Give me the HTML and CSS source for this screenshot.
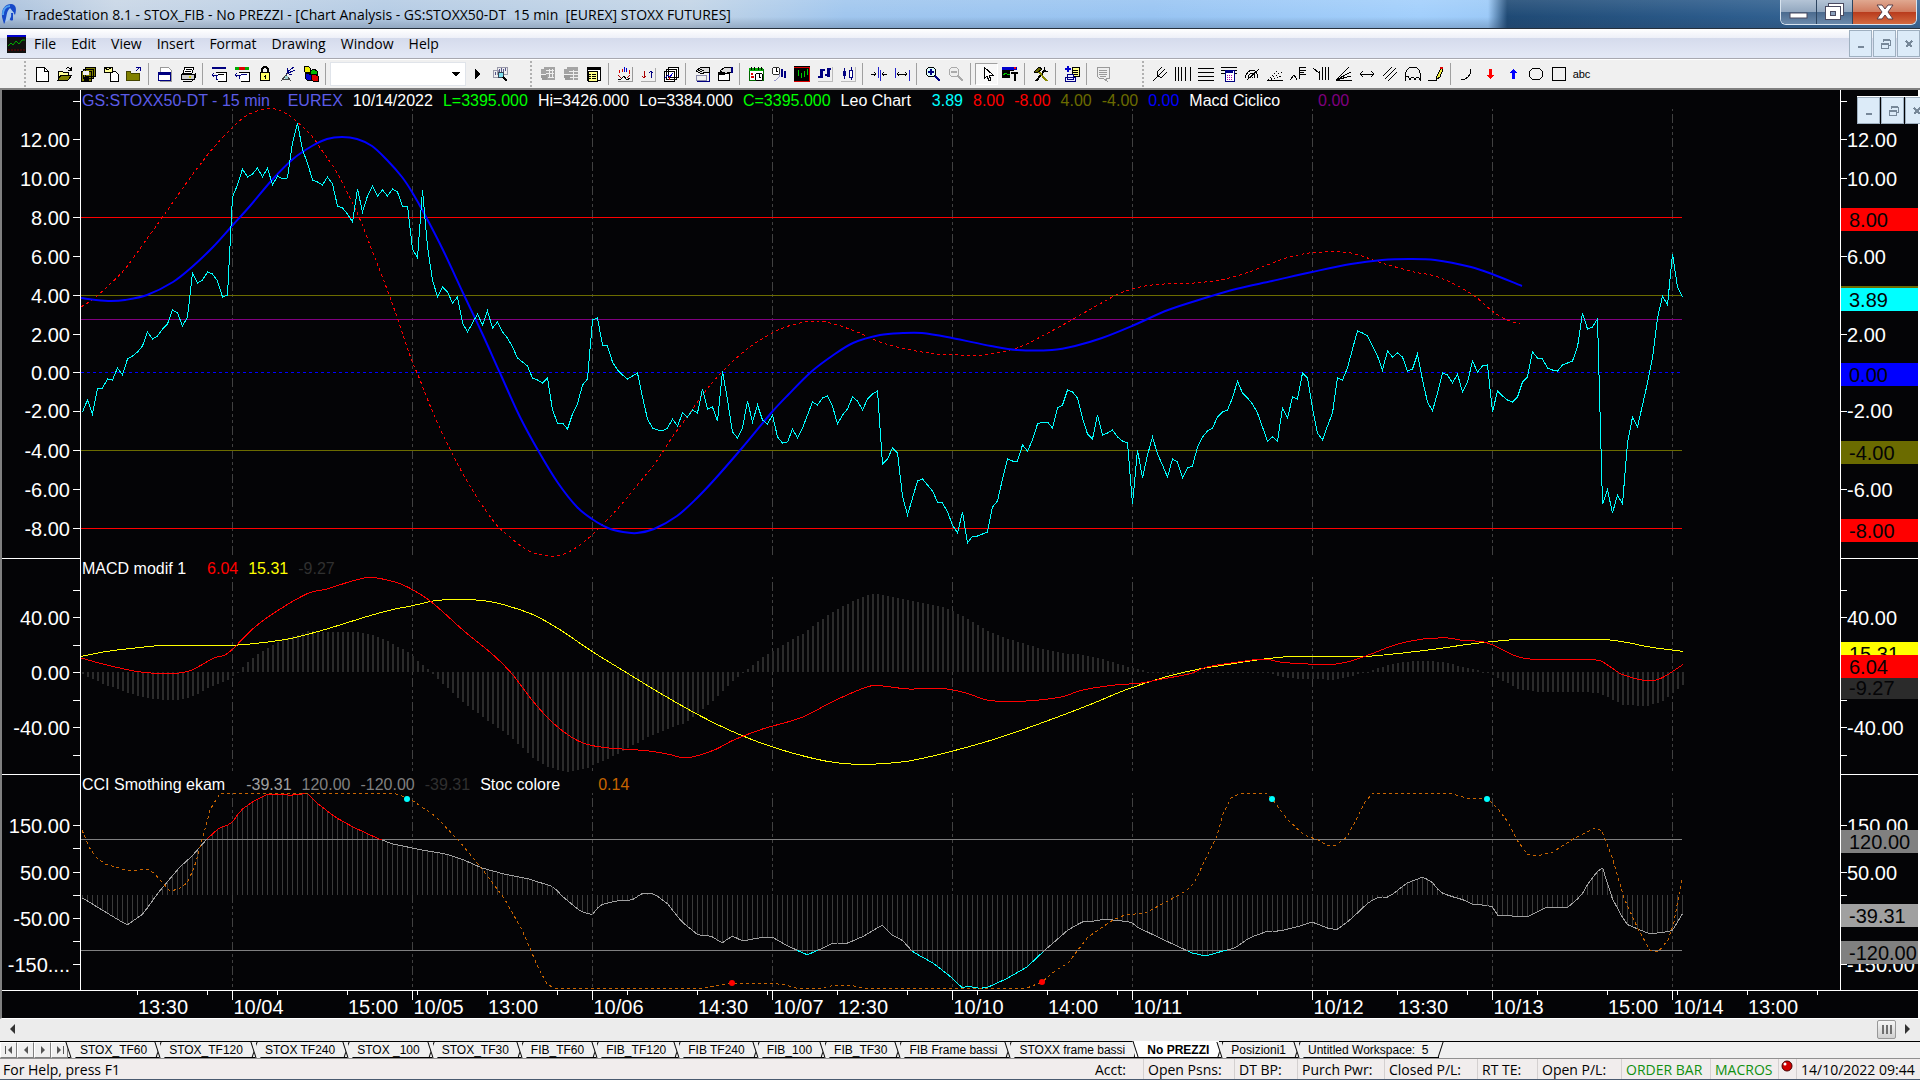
FILE: index.html
```html
<!DOCTYPE html>
<html lang="en">
<head>
  <meta charset="UTF-8">
  <title>TradeStation 8.1 - STOX_FIB</title>
  <link rel="stylesheet" href="styles.css">
</head>
<body>
  <header class="titlebar">
    <svg class="logo" viewBox="0 0 16 22">
      <path d="M1 14 C0 5 5 1 10 1 C15 1 16 6 14 12 L12 9 L12 17 C9 19 8 15 8 12 L3 21 Z" fill="#1648c8"/>
      <path d="M4 19 C6 13 5 9 9 5 L13 10 L10 10 C11 15 8 18 4 19 Z" fill="#a9c9ee"/>
      <path d="M2 12 C2 6 5 3 9 3" stroke="#4fa0f0" stroke-width="2" fill="none"/>
    </svg>
    <h1>TradeStation 8.1 - STOX_FIB - No PREZZI - [Chart Analysis - GS:STOXX50-DT&nbsp; 15 min&nbsp; [EUREX] STOXX FUTURES]</h1>
    <div class="win-buttons">
      <button class="win-min" aria-label="Minimize"><svg width="20" height="8"><rect x="1" y="1" width="17" height="5" fill="#fff" stroke="#4a4a60"/></svg></button>
      <button class="win-max" aria-label="Restore"><svg width="22" height="18"><rect x="4.500" y="0.500" width="15" height="12" fill="#fff" stroke="#4a4a60"/><rect x="1.500" y="3.500" width="15" height="13" fill="#fff" stroke="#4a4a60"/><rect x="6.500" y="8.500" width="5" height="4" fill="#8aa0bc" stroke="#4a4a60"/></svg></button>
      <button class="win-close" aria-label="Close"><svg width="20" height="18"><path d="M2 2 H7 L10 6 L13 2 H18 L13 9 L18 16 H13 L10 12 L7 16 H2 L7 9 Z" fill="#fff" stroke="#5a4048"/></svg></button>
    </div>
  </header>

  <nav class="menubar">
    <svg class="doc-icon" viewBox="0 0 19 18"><rect width="19" height="18" fill="#101010"/><rect width="19" height="2" fill="#00c"/><path d="M1 11 L4 8 L6 10 L9 6 L12 9 L15 5 L18 5" stroke="#0a0" fill="none"/><path d="M1 15 H18" stroke="#700" stroke-dasharray="2 1"/></svg>
    <button>File</button>
    <button>Edit</button>
    <button>View</button>
    <button>Insert</button>
    <button>Format</button>
    <button>Drawing</button>
    <button>Window</button>
    <button>Help</button>
    <div class="mdi-buttons">
      <button aria-label="Minimize chart"><svg width="12" height="12"><path d="M3 9 H9" stroke="#778899" stroke-width="2"/></svg></button>
      <button aria-label="Restore chart"><svg width="12" height="12"><path d="M4 4 V2 H11 V7 H9 M4 1.500 H11 M2 5 H9 V10 H2 Z M2 6 H9" stroke="#778899" fill="none"/></svg></button>
      <button aria-label="Close chart"><svg width="12" height="12"><path d="M3 3 L9 9 M9 3 L3 9" stroke="#778899" stroke-width="2"/></svg></button>
    </div>
  </nav>

  <div class="toolbar">
    <div class="tools">
      <button aria-label="New"><svg viewBox="0 0 16 16"><path d="M2 1 H10 L14 5 V15 H2 Z" fill="#fff" stroke="#000"/><path d="M10 1 V5 H14" fill="none" stroke="#000"/></svg></button>
      <button aria-label="Open"><svg viewBox="0 0 16 16"><path d="M1 14 V5 H5 L6 6 H11 V9" fill="#ff9" stroke="#000"/><path d="M1 14 L4 9 H15 L11 14 Z" fill="#808000" stroke="#000"/><path d="M9 3 Q12 0 14 4 M14 1 V4 H11" fill="none" stroke="#000"/></svg></button>
      <button aria-label="Save all"><svg viewBox="0 0 16 16"><path d="M5 1 H15 V10 H5 Z M3 3 H13 V12 H3 Z M1 5 H11 V15 H1 Z" fill="#808000" stroke="#000"/><rect x="3" y="5" width="6" height="4" fill="#eee"/><rect x="4" y="11" width="5" height="4" fill="#000"/></svg></button>
      <button aria-label="Send"><svg viewBox="0 0 16 16"><path d="M7 5 H12 L15 8 V15 H7 Z" fill="#fff" stroke="#000"/><path d="M1 1 H9 V6 H1 Z" fill="#ff9" stroke="#000"/><path d="M1 1 L5 4 L9 1" stroke="#000" fill="none"/></svg></button>
      <button aria-label="Close workspace"><svg viewBox="0 0 16 16"><path d="M0.500 14.500 V5.500 H4 L5 7 H13.500 V14.500 Z" fill="#808000" stroke="#440"/><path d="M10 5 L14 1 M10 1 H14 V5" stroke="#00008b" fill="none"/></svg></button>
      <span class="sep"></span>
      <button aria-label="Window"><svg viewBox="0 0 16 16"><path d="M3 1 H11 L14 4 V15 H3 Z" fill="#fff" stroke="#999"/><rect x="1.500" y="6.500" width="12" height="8" fill="#fff" stroke="#000080"/><rect x="1" y="6" width="13" height="3" fill="#000080"/></svg></button>
      <button aria-label="Print"><svg viewBox="0 0 16 16"><path d="M5 1 H14 L12 7 H3 Z" fill="#fff" stroke="#000"/><path d="M6 3 H12 M5 5 H11" stroke="#000"/><path d="M1 8 H14 V13 H1 Z" fill="#ccc" stroke="#000"/><path d="M3 15 H12 L15 12 V7" fill="none" stroke="#000"/><path d="M9 11 H11" stroke="#cc0" stroke-width="2"/></svg></button>
      <span class="sep"></span>
      <button aria-label="Format window"><svg viewBox="0 0 16 16"><path d="M1 1 H15 V3 H1 Z" fill="#000080"/><path d="M5 6 H15 V15 H7" fill="#fff" stroke="#000"/><path d="M7 8 H13" stroke="#000"/><path d="M5 9 V13 H7 M1 9 H7 M3 7 L1 9 L3 11" stroke="#000080" fill="none"/></svg></button>
      <button aria-label="Format symbols"><svg viewBox="0 0 16 16"><path d="M1 1 H5 V4 H1 Z M11 1 H15 V4 H11 Z" fill="#0a0"/><path d="M5 1 H11 V4 H5 Z" fill="#d00"/><path d="M5 6 H15 V15 H7" fill="#fff" stroke="#000"/><path d="M7 8 H13 M1 9 H7 M3 7 L1 9 L3 11 M5 9 V13" stroke="#000080" fill="none"/></svg></button>
      <button aria-label="Lock"><svg viewBox="0 0 16 16"><path d="M5 7 V3 Q8 -1 11 3 V7" fill="none" stroke="#000" stroke-width="2"/><rect x="3.500" y="6.500" width="9" height="8" fill="#ff6" stroke="#000"/><path d="M8 9 V13 M7 10 H9" stroke="#000"/></svg></button>
      <button aria-label="Data feed"><svg viewBox="0 0 16 16"><path d="M7 6 L14 1 M6 8 L15 4 M8 2 Q6 8 12 9" stroke="#000080" fill="none"/><path d="M1 15 L6 9 L11 15 M3 13 H10 M6 9 L8 7" stroke="#444" fill="none"/><path d="M5 10 H8 V13 H5 Z" fill="#9cc"/></svg></button>
      <button aria-label="Cubes"><svg viewBox="0 0 16 16"><path d="M1 1 L5 0 L7 2 V6 L3 7 L1 5 Z" fill="#ee0" stroke="#000"/><path d="M7 5 L11 3 L14 5 V9 L10 10 L7 8 Z" fill="#0b0" stroke="#000"/><path d="M2 8 L5 7 L8 9 V14 L4 14 L2 12 Z" fill="#00c" stroke="#000"/><path d="M8 9 L12 8 L15 10 V15 L10 15 L8 13 Z" fill="#d00" stroke="#000"/></svg></button>
      <span class="sep"></span>
      <select class="symbol" aria-label="Symbol"><option></option></select>
      <button class="go" aria-label="Go"><svg viewBox="0 0 16 16"><path d="M6 3 L11 8 L6 13 Z" fill="#000"/></svg></button>
      <button aria-label="Find symbol"><svg viewBox="0 0 16 16"><path d="M5 1 H15 V8 H5 Z M1 4 H6 V11 H1 Z" fill="#eee" stroke="#99a"/><path d="M7 3 V6 M9 2 V6 M11 3 V6 M13 2 V5 M3 6 V9" stroke="#558"/><circle cx="9" cy="9" r="3" fill="#7fe0f0" stroke="#345"/><path d="M11 11 L15 15" stroke="#000" stroke-width="2"/></svg></button>
    </div>
    <div class="tools">
      <button aria-label="Quote data" disabled><svg viewBox="0 0 16 16"><path d="M4 1 H15 V14 H6 V8 H1 V3 H4 Z" fill="#a4a4a4"/><path d="M6 4 H14 M6 7 H14 M9 3 V12 M12 3 V12 M8 11 H14" stroke="#eee"/><path d="M1 9 H7 V14 H2 Z" fill="#999"/></svg></button>
      <button aria-label="Table" disabled><svg viewBox="0 0 16 16"><path d="M4 1 H15 V14 H6 V8 H1 V3 H4 Z" fill="#a4a4a4"/><path d="M6 5 H15 M6 8 H15 M6 11 H15 M10 4 V14" stroke="#eee"/><path d="M1 9 H7 V14 H2 Z" fill="#999"/></svg></button>
      <button aria-label="Data window"><svg viewBox="0 0 16 16"><rect x="1.500" y="1.500" width="13" height="13" fill="#fff" stroke="#000"/><rect x="1" y="1" width="14" height="3"/><rect x="2" y="5" width="9" height="10" fill="#ff8" stroke="#000"/><path d="M3 8 H5 M6 8 H10 M3 10 H5 M6 10 H10 M3 12 H5 M6 12 H10" stroke="#000"/></svg></button>
      <span class="sep"></span>
      <button aria-label="Indicators"><svg viewBox="0 0 16 16"><path d="M15 1 V15 H1" stroke="#999" fill="none"/><path d="M1 13 L4 13 L7 10 L10 14 L13 12" stroke="#000" fill="none"/><path d="M2 4 V7 M5 3 V6 M12 4 V8" stroke="#d00"/><path d="M7 1 V6 M9 2 V6" stroke="#00c"/><path d="M1 9 L4 12 M13 9 L10 12" stroke="#a00"/></svg></button>
      <button aria-label="Strategies"><svg viewBox="0 0 16 16"><path d="M15 2 V15 H1" stroke="#aaa" fill="none"/><path d="M4 5 V12 M2 10 L4 12 L6 10" stroke="#a00" fill="none"/><path d="M11 5 V12 M9 7 L11 5 L13 7" stroke="#000080" fill="none"/></svg></button>
      <button aria-label="Studies"><svg viewBox="0 0 16 16"><path d="M5 1 H15 V11 H5 Z M3 3 H13 V13 H3 Z M1 5 H11 V15 H1 Z" fill="#fff" stroke="#000"/><path d="M2 12 L5 9 L7 11 L10 7" stroke="#00c" fill="none"/><path d="M6 11 V14" stroke="#c00"/></svg></button>
      <span class="sep"></span>
      <button aria-label="Format analysis"><svg viewBox="0 0 16 16"><path d="M2 5 L7 1 H15 V6 H11 L8 8 Z" fill="#ddd" stroke="#000"/><path d="M4 5 L8 3 M6 6 L10 4" stroke="#000"/><rect x="2" y="9" width="10" height="5" fill="#eee" stroke="#88a"/><path d="M15 7 V15 H3" stroke="#000080" fill="none"/></svg></button>
      <button aria-label="Format strategies"><svg viewBox="0 0 16 16"><path d="M3 5 L8 1 H15 V6 H12 L9 8 Z" fill="#ddd" stroke="#000"/><path d="M15 1 V7" stroke="#000080" stroke-width="2"/><rect x="1.500" y="7.500" width="11" height="7" fill="#fff" stroke="#000"/><rect x="1" y="6" width="7" height="3"/></svg></button>
      <span class="sep"></span>
      <button aria-label="Data range"><svg viewBox="0 0 16 16"><rect x="1" y="3" width="14" height="11" fill="#fff" stroke="#060"/><rect x="1" y="2" width="14" height="3" fill="#0a0"/><path d="M3 1 V4 M6 1 V4 M10 1 V4 M13 1 V4" stroke="#000"/><path d="M3 8 H5 M3 11 H6" stroke="#d00" stroke-width="2"/><circle cx="11" cy="11" r="4" fill="#fff" stroke="#000"/><path d="M11 8 V11 H13" stroke="#000" fill="none"/></svg></button>
      <button aria-label="Interval"><svg viewBox="0 0 16 16"><circle cx="5" cy="5" r="4" fill="#fff" stroke="#333"/><path d="M5 2 V5 H7" stroke="#000" fill="none"/><path d="M3 15 Q8 13 9 8" stroke="#99c" fill="none"/><path d="M11 3 V11 M14 5 V12" stroke="#000080" stroke-width="2"/></svg></button>
      <button aria-label="Bar chart"><svg viewBox="0 0 16 16"><rect width="16" height="16" fill="#000"/><path d="M0 1 H15 V15 H0" stroke="#d00" fill="none"/><path d="M4 4 V10 M7 7 V12 M10 5 V11 M13 3 V9" stroke="#0c0"/></svg></button>
      <button aria-label="OHLC bars"><svg viewBox="0 0 16 16"><path d="M15 1 V15 H1" stroke="#bbb" fill="none"/><path d="M4 3 V12 M11 2 V11" stroke="#000080" stroke-width="3"/><path d="M1 11 H4 M5 4 H8 M8 9 H11 M12 3 H14" stroke="#000080" stroke-width="2"/></svg></button>
      <button aria-label="Candlesticks"><svg viewBox="0 0 16 16"><path d="M15 1 V15 H1" stroke="#bbb" fill="none"/><path d="M4 2 V13 M11 1 V14" stroke="#000080"/><rect x="2.500" y="5" width="3" height="5" fill="#000080"/><rect x="9.500" y="4" width="3" height="7" fill="#fff" stroke="#000080"/></svg></button>
      <span class="sep"></span>
      <button aria-label="Decrease spacing"><svg viewBox="0 0 16 16"><path d="M7 1 V12 M9 4 V15" stroke="#22c" /><path d="M0 8 H5 M3 6 L5 8 L3 10 M16 8 H11 M13 6 L11 8 L13 10" stroke="#000" fill="none"/></svg></button>
      <button aria-label="Increase spacing"><svg viewBox="0 0 16 16"><path d="M1 2 V12 M15 4 V15" stroke="#22c"/><path d="M3 8 H13 M5 6 L3 8 L5 10 M11 6 L13 8 L11 10" stroke="#000" fill="none"/></svg></button>
      <span class="sep"></span>
      <button aria-label="Zoom in"><svg viewBox="0 0 16 16"><circle cx="6" cy="6" r="5" fill="#dff" stroke="#000"/><path d="M3 6 H9 M6 3 V9" stroke="#000080" stroke-width="2"/><path d="M10 10 L15 15" stroke="#000080" stroke-width="2"/></svg></button>
      <button aria-label="Zoom out" disabled><svg viewBox="0 0 16 16"><circle cx="6" cy="6" r="5" fill="#eee" stroke="#aaa"/><path d="M3 6 H9" stroke="#aaa" stroke-width="2"/><path d="M10 10 L15 15" stroke="#aaa" stroke-width="2"/></svg></button>
      <span class="sep"></span>
      <button class="pressed" aria-label="Pointer"><svg viewBox="0 0 16 16"><path d="M5 1 V13 L8 10 L10 15 L12 14 L10 9 H14 Z" fill="#fff" stroke="#000"/></svg></button>
      <button aria-label="Chart text"><svg viewBox="0 0 16 16"><rect y="1" width="12" height="11"/><rect y="1" width="15" height="3" fill="#00c"/><rect x="12" y="1" width="2" height="2" fill="#f00"/><path d="M1 9 L4 7 L6 9 L8 8" stroke="#0c0" fill="none"/><rect x="8" y="5" width="8" height="11" fill="#f0f0f0"/><path d="M9 7 H16 M12.500 7 V15" stroke="#000" stroke-width="2"/></svg></button>
      <span class="sep"></span>
      <button aria-label="Tools"><svg viewBox="0 0 16 16"><path d="M3 15 L12 4" stroke="#000" stroke-width="2"/><path d="M14 15 L5 5" stroke="#880" stroke-width="2"/><path d="M1 6 L6 1 L9 3 L4 7 Z" fill="#666600" stroke="#000"/><path d="M11 1 V5 H15" stroke="#000" fill="none"/></svg></button>
      <span class="sep"></span>
      <button aria-label="Add window"><svg viewBox="0 0 16 16"><path d="M1 3 H7 M4 0 V6" stroke="#00c" stroke-width="2"/><rect x="8" y="1" width="7" height="9" fill="#ff8" stroke="#000"/><path d="M9 4 H14 M9 6 H14 M9 8 H14" stroke="#000"/><path d="M3 8 H9 V13 H3 Z M1 11 H11 V15 H1 Z" fill="#eef" stroke="#000080"/></svg></button>
      <span class="sep"></span>
      <button aria-label="Comment" disabled><svg viewBox="0 0 16 16"><path d="M2 1 H14 V12 H11 L12 15 L8 12 H4 L2 10 Z" fill="#eee" stroke="#999"/><path d="M4 4 H12 M4 6 H12 M4 8 H12 M5 10 H11" stroke="#999"/></svg></button>
    </div>
    <div class="tools drawing-tools">
      <button aria-label="Pitchfork"><svg viewBox="0 0 16 16"><path d="M1 15 L7 9 M5 6 V9 Q7 12 10 11 M5 6 L10 1 M7 9 L13 3 M10 11 L15 6" stroke="#000" fill="none"/></svg></button>
      <button aria-label="Time lines"><svg viewBox="0 0 16 16"><path d="M0.500 1 V15 M3.500 1 V15 M6.500 1 V15 M10.500 1 V15 M15.500 1 V15" stroke="#000"/></svg></button>
      <button aria-label="Price lines"><svg viewBox="0 0 16 16"><path d="M0 2.500 H16 M0 6.500 H16 M0 10.500 H16 M0 14.500 H16" stroke="#000"/></svg></button>
      <button aria-label="Calculator"><svg viewBox="0 0 16 16"><path d="M0 1.500 H16 M0 4.500 H16 M0 7.500 H4 M12 7.500 H16" stroke="#000"/><rect x="4" y="4" width="9" height="11" fill="#fff" stroke="#000080"/><path d="M5 6 H12" stroke="#00008b" stroke-width="2"/><path d="M6 9 H12 M6 11 H12 M6 13 H12" stroke="#a0a" stroke-dasharray="1 1"/></svg></button>
      <button aria-label="Arcs"><svg viewBox="0 0 16 16"><path d="M1 12 Q3 4 9 4 Q13 5 14 12 M4 12 Q5 7 8 7 Q11 7 11 12 M6 12 Q7 9 9 12 M3 14 L15 3" stroke="#000" fill="none"/></svg></button>
      <button aria-label="Dotted fan"><svg viewBox="0 0 16 16"><path d="M1 14 L14 1 M1 14 L15 6 M1 14 L15 10" stroke="#000" stroke-dasharray="1 2"/><path d="M0 14.500 H16" stroke="#000"/></svg></button>
      <button aria-label="Retracement"><svg viewBox="0 0 16 16"><path d="M0 14 L4 9 L6 12 V14 M9 13 V1" stroke="#000" fill="none"/><path d="M9 1.500 H16 M9 4.500 H16 M9 6.500 H14 M9 8.500 H16" stroke="#000"/></svg></button>
      <button aria-label="Projection"><svg viewBox="0 0 16 16"><path d="M0 2 L6 7 M6.500 5 V14 M9.500 1 V14 M12.500 1 V14 M15.500 1 V14" stroke="#000"/></svg></button>
      <button aria-label="Fan"><svg viewBox="0 0 16 16"><path d="M0 14 L13 1 M0 14 L15 6 M0 14 L15 10 M0 14.500 H16" stroke="#000"/></svg></button>
      <button aria-label="Horizontal line"><svg viewBox="0 0 16 16"><path d="M2 8 H14 M4 5 L1 8 L4 11 M12 5 L15 8 L12 11" stroke="#000" fill="none"/></svg></button>
      <button aria-label="Parallel lines"><svg viewBox="0 0 16 16"><path d="M1 10 L10 1 M3 13 L14 2 M6 15 L15 6" stroke="#000"/></svg></button>
      <button aria-label="Cycle"><svg viewBox="0 0 16 16"><path d="M0.500 15 V8 Q2 1 8 1 Q14 1 15.500 8 V15 M0 11 Q3 8 5 14 Q8 8 10 14 Q13 8 15 14" stroke="#000" fill="none"/></svg></button>
      <button aria-label="Pencil"><svg viewBox="0 0 16 16"><path d="M0 14.500 H9" stroke="#000"/><path d="M8 14 L9 10 L13 2 L15 3 L12 11 Z" fill="#ee4" stroke="#000"/><path d="M12 2 H15" stroke="#d00" stroke-width="2"/></svg></button>
      <span class="sep"></span>
      <button aria-label="Arc"><svg viewBox="0 0 16 16"><path d="M2 13 H6 Q12 10 12 3" stroke="#000" fill="none"/></svg></button>
      <button aria-label="Down arrow"><svg viewBox="0 0 16 16"><path d="M7 3 H10 V9 H12 L8.500 13 L5 9 H7 Z" fill="#f00"/></svg></button>
      <button aria-label="Up arrow"><svg viewBox="0 0 16 16"><path d="M7 13 H10 V7 H12 L8.500 3 L5 7 H7 Z" fill="#00f"/></svg></button>
      <button aria-label="Ellipse"><svg viewBox="0 0 16 16"><ellipse cx="8" cy="8" rx="7" ry="6" fill="none" stroke="#000"/></svg></button>
      <button aria-label="Rectangle"><svg viewBox="0 0 16 16"><rect x="1.500" y="1.500" width="13" height="13" fill="none" stroke="#000"/></svg></button>
      <button class="abc">abc</button>
    </div>
  </div>

  <main class="chart">
    <section class="panel panel-main">
      <svg class="axis axis-left" id="left1"></svg>
      <div class="plot">
        <div class="legend">
          <span class="violet">GS:STOXX50-DT - 15 min    EUREX</span>
          <span>10/14/2022</span>
          <span class="lime">L=3395.000</span>
          <span>Hi=3426.000</span>
          <span>Lo=3384.000</span>
          <span class="lime">C=3395.000</span>
          <span class="name">Leo Chart</span>
          <span class="cyan">3.89</span>
          <span class="red">8.00</span>
          <span class="red">-8.00</span>
          <span class="olive">4.00</span>
          <span class="olive">-4.00</span>
          <span class="blue">0.00</span>
          <span class="name name-long">Macd Ciclico</span>
          <span class="purple">0.00</span>
        </div>
        <svg class="curves" id="plot1" viewBox="81 109 1759 449" preserveAspectRatio="none"></svg>
      </div>
      <svg class="axis axis-right" id="right1"></svg>
      <div class="mdi-buttons floating">
        <button aria-label="Minimize pane"><svg width="12" height="12"><path d="M3 9 H9" stroke="#778899" stroke-width="2"/></svg></button>
        <button aria-label="Restore pane"><svg width="12" height="12"><path d="M4 4 V2 H11 V7 H9 M4 1.500 H11 M2 5 H9 V10 H2 Z M2 6 H9" stroke="#778899" fill="none"/></svg></button>
        <button aria-label="Close pane"><svg width="12" height="12"><path d="M3 3 L9 9 M9 3 L3 9" stroke="#778899" stroke-width="2"/></svg></button>
      </div>
    </section>
    <section class="panel">
      <svg class="axis axis-left" id="left2"></svg>
      <div class="plot">
        <div class="legend">
          <span class="name">MACD modif 1</span>
          <span class="red">6.04</span>
          <span class="yellow">15.31</span>
          <span class="dark">-9.27</span>
        </div>
        <svg class="curves" id="plot2" viewBox="81 577 1759 198" preserveAspectRatio="none"></svg>
      </div>
      <svg class="axis axis-right" id="right2"></svg>
    </section>
    <section class="panel panel-last">
      <svg class="axis axis-left" id="left3"></svg>
      <div class="plot">
        <div class="legend">
          <span class="name">CCI Smothing ekam</span>
          <span class="silver">-39.31</span>
          <span class="gray">120.00</span>
          <span class="gray">-120.00</span>
          <span class="dark">-39.31</span>
          <span class="name name-long">Stoc colore</span>
          <span class="orange">0.14</span>
        </div>
        <svg class="curves" id="plot3" viewBox="81 793 1759 197" preserveAspectRatio="none"></svg>
      </div>
      <svg class="axis axis-right" id="right3"></svg>
    </section>
    <div class="time-row">
      <svg id="times"></svg>
    </div>
  </main>

  <div class="scrollbar">
    <button aria-label="Scroll left"><svg width="8" height="10"><path d="M7 0 V10 L2 5 Z" fill="#333"/></svg></button>
    <span class="track"></span>
    <span class="thumb"><i></i><i></i><i></i></span>
    <button aria-label="Scroll right"><svg width="8" height="10"><path d="M1 0 V10 L6 5 Z" fill="#333"/></svg></button>
  </div>

  <div class="tabstrip">
    <button class="nav" aria-label="First"><svg width="10" height="10"><path d="M1.500 1 V9" stroke="#555"/><path d="M8 1 V9 L4 5 Z" fill="#555"/></svg></button>
    <button class="nav" aria-label="Previous"><svg width="10" height="10"><path d="M7 1 V9 L3 5 Z" fill="#555"/></svg></button>
    <button class="nav" aria-label="Next"><svg width="10" height="10"><path d="M3 1 V9 L7 5 Z" fill="#555"/></svg></button>
    <button class="nav" aria-label="Last"><svg width="10" height="10"><path d="M8.500 1 V9" stroke="#555"/><path d="M2 1 V9 L6 5 Z" fill="#555"/></svg></button>
    <div class="tabs">
      <button class="tab">STOX_TF60</button>
      <button class="tab">STOX_TF120</button>
      <button class="tab">STOX TF240</button>
      <button class="tab">STOX _100</button>
      <button class="tab">STOX_TF30</button>
      <button class="tab">FIB_TF60</button>
      <button class="tab">FIB_TF120</button>
      <button class="tab">FIB TF240</button>
      <button class="tab">FIB_100</button>
      <button class="tab">FIB_TF30</button>
      <button class="tab">FIB Frame bassi</button>
      <button class="tab">STOXX frame bassi</button>
      <button class="tab active">No PREZZI</button>
      <button class="tab">Posizioni1</button>
      <button class="tab">Untitled Workspace:&nbsp; 5</button>
    </div>
  </div>

  <footer class="statusbar">
    <span>For Help, press F1</span>
    <span>Acct:</span>
    <span>Open Psns:</span>
    <span>DT BP:</span>
    <span>Purch Pwr:</span>
    <span>Closed P/L:</span>
    <span>RT TE:</span>
    <span>Open P/L:</span>
    <span class="on">ORDER BAR</span>
    <span class="on">MACROS</span>
    <span class="ball"><svg width="12" height="12"><circle cx="6" cy="6" r="5" fill="#d00000" stroke="#400"/><circle cx="4" cy="4" r="1.500" fill="#fff"/></svg></span>
    <span>14/10/2022 09:44</span>
  </footer>

  <script src="chart.js"></script>
</body>
</html>
```
FILE: styles.css
```css
* {
  box-sizing: border-box;
}
body {
  margin: 0;
  height: 100vh;
  display: flex;
  flex-direction: column;
  overflow: hidden;
  background: #f0f0f0;
  color: #000;
  font-family: "Open Sans", "Noto Sans", sans-serif;
  font-size: 14px;
}
button {
  margin: 0;
  padding: 0;
  border: none;
  background: none;
  color: inherit;
  font: inherit;
  display: flex;
  align-items: center;
  justify-content: center;
}

/* title bar */
.titlebar {
  flex: 0 0 29px;
  display: flex;
  align-items: center;
  border-bottom: 1px solid #26303c;
  background: linear-gradient(to bottom, rgba(255,255,255,0.1), rgba(255,255,255,0) 60%, rgba(40,60,90,0.25)),
    linear-gradient(to right, #a8c0dc 0%, #c8d6e6 6%, #b4cbe4 20%, #c2d4e6 36%, #a0c6ee 44%, #98c4f2 60%, #a2cffc 74%, #9ccaf8 77.5%, #1f4a75 78.5%, #2c5c8c 90%, #3c6a98 100%);
}
.logo {
  width: 16px;
  height: 22px;
  margin: 0 8px 0 1px;
}
.titlebar h1 {
  flex: 1;
  margin: 0;
  font-size: 14px;
  font-weight: normal;
  white-space: nowrap;
}
.win-buttons {
  display: flex;
  align-self: flex-start;
  height: 25px;
  margin-right: 3px;
  border: 1px solid #d8e4f0;
  border-top: none;
  border-radius: 0 0 6px 6px;
  overflow: hidden;
}
.win-min, .win-max {
  width: 36px;
  background: linear-gradient(#b4c4d6, #93a8c0 48%, #4a6a8e 50%, #6c8aab);
  border-right: 1px solid #2c4460;
}
.win-min {
  padding-top: 8px;
}
.win-close {
  width: 63px;
  background: linear-gradient(#e0a890, #d07c60 48%, #b83a1c 50%, #d46a40);
}

/* menu */
.menubar {
  flex: 0 0 30px;
  display: flex;
  align-items: center;
  padding-left: 7px;
  gap: 15px;
  background: linear-gradient(#ffffff, #eef0f8 30%, #d5dbec 32%, #e2e7f5 90%);
  border-bottom: 1px solid #a8a8b0;
}
.doc-icon {
  width: 19px;
  height: 18px;
  margin-right: -7px;
}
.mdi-buttons {
  display: flex;
  gap: 1px;
  margin-left: auto;
}
.mdi-buttons button {
  width: 23px;
  height: 27px;
  border: 1px solid #9fb0c0;
  background: #dcebf8;
}
.mdi-buttons svg {
  shape-rendering: crispEdges;
}
.floating {
  position: absolute;
  top: 6px;
  right: -10px;
  border-top: 1px solid #fff;
}

/* toolbar */
.toolbar {
  flex: 0 0 31px;
  display: flex;
  align-items: center;
  padding-left: 24px;
  gap: 19px;
  background: #f0f0f0;
  border-top: 1px solid #fff;
  border-bottom: 2px solid #808080;
}
.tools {
  display: flex;
  align-items: center;
}
.tools::before {
  content: "";
  height: 26px;
  margin-right: 4px;
  border-left: 2px dotted #b0b0b0;
}
.drawing-tools {
  margin-left: 9px;
}
.tools button {
  width: 23px;
  height: 22px;
}
.tools button svg {
  width: 16px;
  height: 16px;
  shape-rendering: crispEdges;
}
.tools .go {
  width: 22px;
}
.tools .pressed {
  background: #f8f8f8;
  border: 1px solid #a0a0a0;
  border-right-color: #fff;
  border-bottom-color: #fff;
}
.tools .abc {
  font-family: "Liberation Sans", Arial, sans-serif;
  font-size: 11px;
}
.sep {
  width: 1px;
  height: 22px;
  margin: 0 4px 0 3px;
  background: #a0a0a0;
}
.symbol {
  width: 136px;
  height: 24px;
  padding: 0 4px;
  border: 1px solid #e0e4ea;
  appearance: none;
  background-color: #fff;
  background-image: linear-gradient(to bottom left, #000 50%, transparent 50%), linear-gradient(to bottom right, #000 50%, transparent 50%);
  background-position: right 9px center, right 5px center;
  background-size: 4px 5px;
  background-repeat: no-repeat;
}

/* chart */
.chart {
  flex: 1;
  min-height: 0;
  display: flex;
  flex-direction: column;
  background: #040406;
  color: #fff;
  border-left: 2px solid #808080;
  border-right: 2px solid #fff;
  border-bottom: 1px solid #fff;
  font-family: "Liberation Sans", Arial, sans-serif;
}
.panel {
  position: relative;
  flex: 216 0 0;
  min-height: 0;
  display: grid;
  grid-template-columns: 79px 1fr 78px;
  grid-template-rows: 100%;
}
.panel-main {
  flex-grow: 469;
}
.panel-last {
  flex-grow: 215;
}
.axis {
  width: 100%;
  height: 100%;
  border-bottom: 1px solid #fff;
  font-size: 20px;
  fill: #fff;
}
.panel-last .axis {
  border-bottom: none;
}
.axis line, .time-row line {
  stroke: #fff;
  shape-rendering: crispEdges;
}
.axis-left {
  border-right: 1px solid #fff;
  text-anchor: end;
}
.axis-right {
  border-left: 1px solid #fff;
}
.plot {
  display: flex;
  flex-direction: column;
  min-width: 0;
}
.panel-main .plot {
  padding-top: 1px;
}
.legend {
  display: flex;
  gap: 10px;
  height: 18px;
  padding-left: 1px;
  font-size: 16px;
  line-height: 20px;
  white-space: pre;
}
.name {
  margin-right: 11px;
}
.name-long {
  margin-right: 28px;
}
.curves {
  flex: 1;
  min-height: 0;
  width: 100%;
  overflow: visible;
  fill: none;
}
.panel-main .curves {
  margin-bottom: 1px;
}
.curves > * {
  vector-effect: non-scaling-stroke;
}
.crisp {
  shape-rendering: crispEdges;
}
.day {
  stroke: #404040;
  stroke-dasharray: 9 3 3 3 3 3;
  stroke-dashoffset: 19;
}
.violet { color: #5c5ce8; }
.lime { color: #00ff00; }
.cyan { color: #00ffff; }
.red { color: #ff0000; }
.olive { color: #6b6b00; }
.blue { color: #0000ff; }
.purple { color: #800080; }
.yellow { color: #ffff00; }
.dark { color: #303030; }
.silver { color: #a0a0a0; }
.gray { color: #808080; }
.orange { color: #c86400; }

.time-row {
  flex: 0 0 28px;
  padding: 0 78px 0 79px;
  border-top: 1px solid #fff;
}
.time-row svg {
  display: block;
  width: 100%;
  height: 27px;
  overflow: visible;
  font-size: 20px;
  fill: #fff;
}

/* scrollbar */
.scrollbar {
  flex: 0 0 22px;
  display: flex;
  align-items: center;
  padding: 0 8px 2px;
  background: #ececec;
}
.track {
  flex: 1;
}
.thumb {
  width: 19px;
  height: 19px;
  margin-right: 8px;
  display: flex;
  align-items: center;
  justify-content: center;
  gap: 2px;
  border: 1px solid #989898;
  border-radius: 2px;
  background: linear-gradient(#f6f6f6, #d0d0d0);
}
.thumb i {
  width: 2px;
  height: 9px;
  background: #707070;
}

/* workspace tabs */
.tabstrip {
  flex: 0 0 18px;
  display: flex;
  border-top: 1px solid #000;
  border-bottom: 1px solid #909090;
  background: #f0f0f0;
}
.nav {
  width: 17px;
  border: 1px solid #fff;
  border-right-color: #808080;
  border-bottom-color: #808080;
}
.tabs {
  display: flex;
}
.tab {
  position: relative;
  height: 16px;
  padding: 1px 10px 0 12px;
  border-bottom: 1px solid #000;
  font-family: "Liberation Sans", Arial, sans-serif;
  font-size: 12px;
  white-space: nowrap;
}
.tab::before, .tab::after {
  content: "";
  position: absolute;
  top: 0;
  width: 4px;
  height: 16px;
}
.tab::before {
  left: 0;
  border-left: 1px solid #000;
  background: #f0f0f0;
  transform: skewX(18deg);
}
.tab::after {
  right: -2px;
  border-right: 1px solid #000;
  transform: skewX(-18deg);
}
.tab.active {
  margin-top: -1px;
  height: 17px;
  background: #fff;
  font-weight: bold;
}
.tab.active::before {
  background: #fff;
}

/* status bar */
.statusbar {
  flex: 0 0 21px;
  display: grid;
  grid-template-columns: 1fr 51px 91px 63px 87px 93px 60px 84px 89px 68px 18px 124px;
  background: #f1eded;
  border-bottom: 1px solid #4a5a70;
  line-height: 18px;
  white-space: nowrap;
}
.statusbar span {
  padding: 2px 0 0 4px;
  border-left: 1px solid #d4d0d0;
}
.statusbar span:nth-child(-n+2) {
  padding-left: 2px;
  border-left-color: transparent;
}
.statusbar .on {
  color: #109010;
}
.statusbar .ball {
  padding: 1px 0 0 2px;
}
.statusbar .ball svg {
  display: block;
}
```
FILE: chart.js
```js
const SVG = 'http://www.w3.org/2000/svg';
const FIRST = 82.5;
const STEP = 5;
const BARS = 321;
const DAYS = ['10/04', '10/05', '10/06', '10/07', '10/10', '10/11', '10/12', '10/13', '10/14'];

// one value per 15 minute bar
const leo = [
  412,400,414,389,388,379,380,368,375,359,356,352,346,332,339,336,329,324,310,313,
  326,317,273,283,280,272,274,281,297,295,197,185,169,177,174,168,177,168,185,176,
  179,178,143,123,150,163,180,182,185,177,184,206,208,214,222,189,212,196,186,196,
  190,196,189,192,206,206,249,258,190,247,280,297,287,292,303,297,323,332,323,314,
  325,311,328,322,332,338,347,358,362,366,378,380,383,378,410,423,423,429,414,404,
  385,379,320,318,345,346,362,370,375,379,376,373,397,419,428,430,431,428,419,426,
  413,417,410,413,389,409,407,421,371,400,432,438,428,401,422,405,420,424,415,437,
  443,442,429,438,428,415,402,405,398,396,406,424,415,409,397,401,410,399,394,391,
  464,459,448,453,496,515,498,481,479,485,491,502,503,512,525,533,512,543,536,536,
  534,532,507,501,479,459,461,461,445,451,440,424,422,422,428,408,405,390,392,398,
  418,434,439,415,435,433,430,437,441,443,504,450,478,455,437,454,465,477,459,462,
  478,468,466,447,437,431,428,417,412,410,398,381,393,398,404,413,427,441,437,441,
  408,418,397,399,373,378,408,433,440,426,413,378,380,368,349,331,333,336,346,356,
  370,351,357,353,357,371,369,354,380,402,411,393,373,375,383,374,392,382,361,372,
  366,365,412,391,396,400,402,397,382,377,352,358,359,368,370,371,365,363,361,347,
  313,329,327,319,504,490,513,495,504,443,417,427,405,383,358,318,296,305,254,287,
  297
];

const cycleSlow = [
  [81,298],[96,300],[111,301],[125,300],[147,295],[173,282],[192,267],[213,247],[232,226],[250,206],[272,180],
  [293,159],[312,146],[327,139],[342,137],[357,139],[372,146],[387,160],[402,177],[412,192],[425,215],[443,250],
  [464,295],[482,333],[500,373],[520,417],[539,452],[558,483],[577,507],[592,519],[608,528],[623,532],[637,533],
  [654,529],[677,516],[696,499],[715,479],[742,448],[772,412],[788,395],[811,372],[832,356],[853,343],[880,335],
  [903,333],[922,333],[952,338],[991,346],[1017,350],[1052,350],[1075,346],[1102,338],[1132,326],[1168,310],
  [1205,298],[1236,289],[1272,281],[1312,272],[1351,264],[1382,260],[1409,259],[1435,260],[1471,267],[1492,274],[1522,286]
];

const cycleFast = [
  [81,307],[92,300],[107,287],[125,269],[146,240],[162,218],[180,192],[196,170],[214,147],[232,128],[246,116],
  [261,110],[275,109],[287,114],[297,122],[311,135],[323,152],[336,171],[346,190],[359,217],[373,253],[391,300],
  [412,361],[418,375],[434,415],[452,453],[471,488],[495,523],[511,538],[529,551],[550,556],[564,554],[577,547],
  [592,535],[608,519],[621,505],[639,483],[656,462],[673,436],[685,420],[704,393],[722,372],[746,350],[772,333],
  [792,325],[815,321],[834,324],[857,332],[880,342],[906,349],[937,354],[960,355],[983,355],[1017,348],[1048,333],
  [1075,318],[1098,305],[1123,292],[1152,285],[1194,283],[1225,279],[1252,271],[1283,259],[1309,253],[1330,252],
  [1351,253],[1382,263],[1414,272],[1435,276],[1456,285],[1477,298],[1492,311],[1505,319],[1520,324]
];

const macdSignal = [
  [81,656.5],[107,651.4],[138,647.7],[165,645.3],[232,645.3],[263,642.6],[290,638.6],[317,631.8],[344,623.7],
  [370,615.6],[393,609.5],[412,605.8],[435,600.7],[460,599.4],[489,601.4],[513,607.5],[536,616],[562,631],
  [592,651.4],[625,671.7],[661,693.7],[700,715.7],[729,730],[762,743.4],[794,753.5],[827,761.3],[851,764],
  [876,764],[909,761],[945,753],[982,743],[1019,731],[1055,718],[1092,703.8],[1129,688.6],[1166,676.8],
  [1198,669.3],[1231,664],[1264,659],[1292,656.5],[1363,656.5],[1399,653.4],[1438,648.7],[1474,643.6],
  [1517,639.6],[1604,639.6],[1624,642],[1652,647.4],[1683,651.4]
];

const macdLine = [
  [81,658],[103,664],[134,671],[156,673.4],[179,673],[192,670],[214,658],[225,655],[232,649.7],[254,627.8],
  [277,611],[308,593.3],[326,589.2],[353,580.8],[370,577.4],[393,581.4],[408,587.2],[431,601.7],[464,631],
  [495,656.5],[513,675],[531,698.7],[549,719],[567,734.2],[585,743.7],[607,747.8],[647,750.8],[670,754.5],
  [684,758],[700,755],[717,748.8],[733,740.3],[762,729.2],[802,717.3],[835,700.4],[868,686.6],[878,685.6],
  [909,689],[941,688.3],[966,693],[986,699.8],[1006,701.5],[1035,700.4],[1064,696.4],[1080,690.6],[1113,685.2],
  [1141,683],[1162,679],[1190,673.7],[1206,667.3],[1231,663],[1264,659.2],[1284,662.6],[1332,664.3],[1351,661],
  [1371,654],[1397,644.3],[1423,639],[1448,638],[1462,640.3],[1484,642],[1498,647.4],[1517,656.5],[1537,659.5],
  [1598,660.2],[1610,666.6],[1622,674.4],[1648,680.8],[1662,677.8],[1683,664.5]
];

const cci = [
  [81,897],[107,913],[127,925],[143,914],[158,893],[179,868],[192,856],[207,839],[219,828],[231,824],[241,810],
  [254,801],[268,794],[286,795],[297,795],[307,793],[317,803],[335,817],[353,827],[379,839],[393,844],[422,850],
  [446,854],[464,860],[482,868],[504,874],[529,879],[554,887],[562,896],[580,911],[592,915],[600,905],[616,901],
  [632,900],[643,893],[654,894],[667,903],[681,921],[698,935],[711,936],[722,943],[732,936],[743,941],[758,938],
  [772,937],[786,945],[807,955],[823,948],[833,943],[848,943],[864,936],[882,925],[892,935],[902,940],[913,952],
  [933,963],[951,977],[962,988],[968,986],[976,988],[986,988],[1006,979],[1027,967],[1045,950],[1068,930],
  [1082,922],[1096,921],[1104,919],[1131,922],[1137,927],[1162,939],[1192,953],[1206,956],[1223,951],[1235,948],
  [1249,938],[1268,931],[1280,931],[1300,926],[1312,922],[1330,929],[1338,929],[1351,919],[1369,902],[1379,897],
  [1389,897],[1407,883],[1423,877],[1432,882],[1440,892],[1450,896],[1464,900],[1472,904],[1492,906],[1497,915],
  [1527,917],[1547,907],[1567,908],[1581,896],[1589,882],[1602,866],[1612,898],[1626,924],[1650,934],[1672,931],[1683,913]
];

const stoc = [
  [82,830],[89,847],[96,857],[105,864],[129,871],[147,869],[154,873],[170,891],[179,889],[187,883],[194,868],
  [203,837],[210,810],[219,795],[221,793],[393,793],[402,796],[413,801],[435,816],[460,842],[482,869],[504,898],
  [522,930],[538,967],[547,984],[554,988],[704,988],[721,985],[732,983],[770,983],[786,985],[796,988],[821,988],
  [831,986],[849,985],[864,988],[1027,988],[1042,982],[1055,971],[1068,963],[1088,937],[1113,920],[1125,915],
  [1145,913],[1166,902],[1186,891],[1194,883],[1206,858],[1217,836],[1223,814],[1231,798],[1241,793],[1266,793],
  [1272,799],[1288,820],[1304,835],[1318,840],[1326,845],[1336,845],[1347,837],[1357,818],[1365,802],[1373,793],
  [1450,793],[1466,798],[1487,798],[1498,809],[1508,822],[1517,840],[1527,854],[1537,856],[1553,852],[1573,839],
  [1595,828],[1602,831],[1612,857],[1624,898],[1638,929],[1650,950],[1658,952],[1668,940],[1674,922],[1682,878]
];

function add(parent, name, attrs, text) {
  const node = document.createElementNS(SVG, name);
  for (const key in attrs) node.setAttribute(key, attrs[key]);
  if (text !== undefined) node.textContent = text;
  parent.appendChild(node);
  return node;
}

// value of a series at x
function at(points, x) {
  let i = 1;
  while (i < points.length - 1 && points[i][0] < x) i++;
  const [x0, y0] = points[i - 1];
  const [x1, y1] = points[i];
  return y0 + (y1 - y0) * (x - x0) / (x1 - x0);
}

function smoothPath(p) {
  let d = 'M' + p[0];
  for (let i = 0; i < p.length - 1; i++) {
    const a = p[i - 1] || p[i], b = p[i], c = p[i + 1], e = p[i + 2] || c;
    const k = (c[0] - b[0]) / 3;
    const s1 = (c[1] - a[1]) / (c[0] - a[0]);
    const s2 = (e[1] - b[1]) / (e[0] - b[0]);
    d += ` C${b[0] + k} ${b[1] + s1 * k} ${c[0] - k} ${c[1] - s2 * k} ${c[0]} ${c[1]}`;
  }
  return d;
}

function level(plot, y, color, dash) {
  add(plot, 'line', { x1: 81, x2: 1682, y1: y, y2: y, stroke: color, 'stroke-dasharray': dash || 'none', class: 'crisp' });
}

function dayLines(plot, top, bottom) {
  DAYS.forEach((day, i) => {
    const x = 232.5 + i * 180;
    add(plot, 'line', { x1: x, x2: x, y1: top, y2: bottom, class: 'day crisp' });
  });
}

// ticks: [y, label, left label]; tags: [y, label, background]
function axes(n, top, height, ticks, tags) {
  const left = document.getElementById('left' + n);
  const right = document.getElementById('right' + n);
  const pct = y => (y - top) / height * 100 + '%';
  ticks.forEach(([y, label, leftLabel]) => {
    add(left, 'line', { x1: 71, x2: 78, y1: pct(y), y2: pct(y) });
    add(right, 'line', { x1: 0, x2: 6, y1: pct(y), y2: pct(y) });
    if (label) {
      add(left, 'text', { x: 68, y: pct(y), dy: 7 }, leftLabel || label);
      add(right, 'text', { x: 6, y: pct(y), dy: 7 }, label);
    }
  });
  tags.forEach(([y, label, back]) => {
    add(right, 'rect', { x: 0, y: pct(y - 9), width: '100%', height: 23, fill: back });
    if (label) add(right, 'text', { x: 8, y: pct(y - 9), dy: 19, fill: '#040406' }, label);
  });
}

// price panel
const plot1 = document.getElementById('plot1');
dayLines(plot1, 109, 555);
level(plot1, 217.5, '#f00');
level(plot1, 528.5, '#f00');
level(plot1, 295.5, '#6b6b00');
level(plot1, 450.5, '#6b6b00');
level(plot1, 319.5, '#800080');
level(plot1, 372.5, '#00f', '3 3');
add(plot1, 'path', { d: smoothPath(cycleFast), stroke: '#f00', 'stroke-dasharray': '3 3', class: 'crisp' });
add(plot1, 'path', { d: smoothPath(cycleSlow), stroke: '#00f', 'stroke-width': 2 });
add(plot1, 'polyline', { points: leo.map((y, i) => [FIRST + i * STEP, y]).join(' '), stroke: '#0ff', class: 'crisp' });
axes(1, 90, 468, [
  [101.5], [139.5, '12.00'], [178.5, '10.00'], [217.5, '8.00'], [256.5, '6.00'], [295.5, '4.00'], [334.5, '2.00'],
  [372.5, '0.00'], [411.5, '-2.00'], [450.5, '-4.00'], [489.5, '-6.00'], [528.5, '-8.00']
], [
  [217, '8.00', '#f00'], [295, '', '#6b6b00'], [297, '3.89', '#0ff'], [372, '0.00', '#00f'],
  [450, '-4.00', '#6b6b00'], [528, '-8.00', '#f00']
]);

// macd panel
const plot2 = document.getElementById('plot2');
dayLines(plot2, 577, 771);
for (let i = 0; i < BARS; i++) {
  const x = FIRST + i * STEP;
  const diff = at(macdLine, x) - at(macdSignal, x);
  add(plot2, 'line', { x1: x, x2: x, y1: 672, y2: 672 + (Math.abs(diff) < 1 ? 1 : diff), stroke: '#2b2b2b', 'stroke-width': 2, class: 'crisp' });
}
add(plot2, 'path', { d: smoothPath(macdSignal), stroke: '#ff0', class: 'crisp' });
add(plot2, 'path', { d: smoothPath(macdLine), stroke: '#f00', class: 'crisp' });
axes(2, 559, 215, [
  [590.5], [617.5, '40.00'], [645.5], [672.5, '0.00'], [700.5], [727.5, '-40.00'], [755.5]
], [
  [685, '-9.27', '#2b2b2b'], [651, '15.31', '#ff0'], [664, '6.04', '#f00']
]);

// cci panel
const plot3 = document.getElementById('plot3');
dayLines(plot3, 793, 987);
for (let i = 0; i < BARS; i++) {
  const x = FIRST + i * STEP;
  add(plot3, 'line', { x1: x, x2: x, y1: 895, y2: at(cci, x), stroke: '#3a3a3a', class: 'crisp' });
}
level(plot3, 839.5, '#808080');
level(plot3, 950.5, '#808080');
for (let i = 0; i < BARS - 1; i++) {
  const x = FIRST + i * STEP;
  const y1 = at(cci, x);
  const y2 = at(cci, x + STEP);
  const mid = (y1 + y2) / 2;
  const color = mid < 839.5 ? '#f00' : mid > 950.5 ? '#0ff' : '#a0a0a0';
  add(plot3, 'line', { x1: x, x2: x + STEP, y1, y2, stroke: color, class: 'crisp' });
}
add(plot3, 'polyline', { points: stoc.join(' '), stroke: '#c86400', 'stroke-dasharray': '3 3', class: 'crisp' });
[[407, 799, '#0ff'], [1272, 799, '#0ff'], [1487, 799, '#0ff'], [732, 983, '#f00'], [1042, 982, '#f00']].forEach(([cx, cy, fill]) => {
  add(plot3, 'circle', { cx, cy, r: 3, fill });
});
axes(3, 775, 215, [
  [825.5, '150.00'], [848.5], [872.5, '50.00'], [895.5], [918.5, '-50.00'], [941.5], [964.5, '-150.00', '-150....']
], [
  [839, '120.00', '#808080'], [913, '-39.31', '#a0a0a0'], [950, '-120.00', '#808080']
]);

// time axis
const times = document.getElementById('times');
const xPct = x => (x - 81) / 1759 * 100 + '%';
for (let x = 137.5; x < 1840; x += 70) {
  add(times, 'line', { x1: xPct(x), x2: xPct(x), y1: 0, y2: 4 });
}
DAYS.forEach((day, i) => {
  const x = 232.5 + i * 180;
  add(times, 'line', { x1: xPct(x), x2: xPct(x), y1: 0, y2: 9 });
  add(times, 'text', { x: xPct(x), dx: 1, y: 23 }, day);
});
[[137, '13:30'], [347, '15:00'], [487, '13:00'], [697, '14:30'], [837, '12:30'], [1047, '14:00'],
 [1397, '13:30'], [1607, '15:00'], [1747, '13:00']].forEach(([x, label]) => {
  add(times, 'text', { x: xPct(x), dx: 1, y: 23 }, label);
});
```
